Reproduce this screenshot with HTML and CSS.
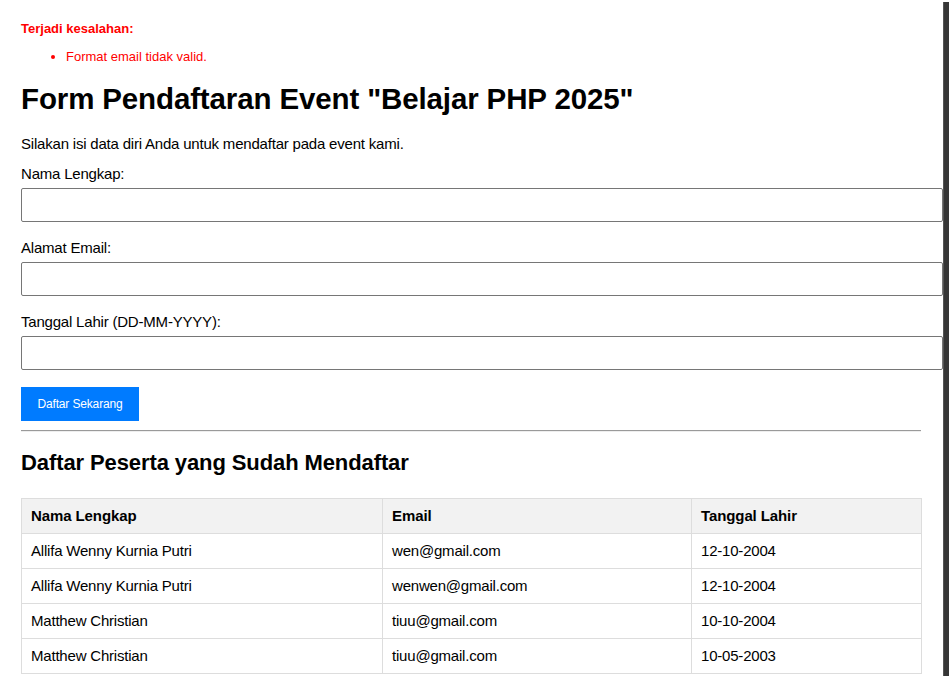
FILE: index.html
```html
<!DOCTYPE html>
<html lang="id">
<head>
<meta charset="utf-8">
<title>Form Pendaftaran Event</title>
<link rel="stylesheet" href="styles.css">
</head>
<body>
<div class="page">
  <div class="alert">
    <p class="alert-title">Terjadi kesalahan:</p>
    <ul class="alert-list">
      <li>Format email tidak valid.</li>
    </ul>
  </div>

  <h1 class="title">Form Pendaftaran Event "Belajar PHP 2025"</h1>
  <p class="intro">Silakan isi data diri Anda untuk mendaftar pada event kami.</p>

  <form class="form">
    <label class="label" for="nama">Nama Lengkap:</label>
    <input class="input" type="text" id="nama">
    <label class="label" for="email">Alamat Email:</label>
    <input class="input" type="text" id="email">
    <label class="label" for="tgl">Tanggal Lahir (DD-MM-YYYY):</label>
    <input class="input" type="text" id="tgl">
    <button class="btn" type="button">Daftar Sekarang</button>
  </form>

  <hr class="divider">

  <h2 class="subtitle">Daftar Peserta yang Sudah Mendaftar</h2>

  <table class="table">
    <colgroup>
      <col class="col-name">
      <col class="col-email">
      <col class="col-date">
    </colgroup>
    <thead>
      <tr><th>Nama Lengkap</th><th>Email</th><th>Tanggal Lahir</th></tr>
    </thead>
    <tbody>
      <tr><td>Allifa Wenny Kurnia Putri</td><td>wen@gmail.com</td><td>12-10-2004</td></tr>
      <tr><td>Allifa Wenny Kurnia Putri</td><td>wenwen@gmail.com</td><td>12-10-2004</td></tr>
      <tr><td>Matthew Christian</td><td>tiuu@gmail.com</td><td>10-10-2004</td></tr>
      <tr><td>Matthew Christian</td><td>tiuu@gmail.com</td><td>10-05-2003</td></tr>
    </tbody>
  </table>
</div>
<div class="edge"></div>
</body>
</html>
```

FILE: styles.css
```css
html, body {
  margin: 0;
  padding: 0;
  overflow: hidden;
  background: #fff;
}

body {
  font-family: "Liberation Sans", Arial, sans-serif;
  color: #000;
}

.page {
  width: 900px;
  margin-left: 21px;
}

.alert {
  color: #ff0000;
  font-size: 13px;
  line-height: 15px;
}

.alert-title {
  margin: 21px 0 0;
  font-weight: bold;
}

.alert-list {
  margin: 13px 0 0;
  padding-left: 45px;
}

.title {
  margin: 18px 0 0;
  font-size: 29.5px;
  line-height: 34px;
  font-weight: bold;
  letter-spacing: -0.13px;
}

.intro {
  margin: 19px 0 0;
  font-size: 15px;
  line-height: 18px;
  letter-spacing: -0.2px;
}

.form {
  display: flex;
  flex-direction: column;
  align-items: flex-start;
  margin-top: 12px;
}

.label {
  font-size: 15px;
  line-height: 18px;
  margin-bottom: 5px;
  letter-spacing: -0.2px;
}

.input {
  box-sizing: content-box;
  width: 100%;
  height: 32px;
  padding: 0 10px;
  margin: 0 0 17px;
  border: 1px solid #767676;
  border-radius: 2px;
  font-family: inherit;
  font-size: 15px;
  background: #fff;
}

.btn {
  width: 118px;
  margin: 0;
  padding: 10px 0;
  border: none;
  background: #007bff;
  color: #fff;
  font-family: inherit;
  font-size: 12px;
  line-height: 14px;
  letter-spacing: -0.15px;
  text-align: center;
  cursor: pointer;
}

.divider {
  margin: 9px 0 0;
  border: 0;
  border-top: 1px solid #9a9a9a;
  border-bottom: 1px solid #eeeeee;
  height: 0;
}

.subtitle {
  margin: 18px 0 0;
  font-size: 22px;
  line-height: 25px;
  font-weight: bold;
  letter-spacing: -0.1px;
}

.table {
  margin-top: 23px;
  width: 900px;
  border-collapse: collapse;
  table-layout: fixed;
  font-size: 15px;
  line-height: 18px;
}

.col-name { width: 361px; }
.col-email { width: 309px; }
.col-date { width: 230px; }

.table th,
.table td {
  border: 1px solid #dddddd;
  padding: 8px 9px;
  text-align: left;
}

.table td {
  letter-spacing: -0.2px;
}

.table th {
  background: #f2f2f2;
  font-weight: bold;
  letter-spacing: -0.1px;
}

.edge {
  position: fixed;
  top: 2px;
  bottom: 0;
  left: 943px;
  width: 5px;
  background: #363636;
  border-left: 1px solid #555;
}
```
